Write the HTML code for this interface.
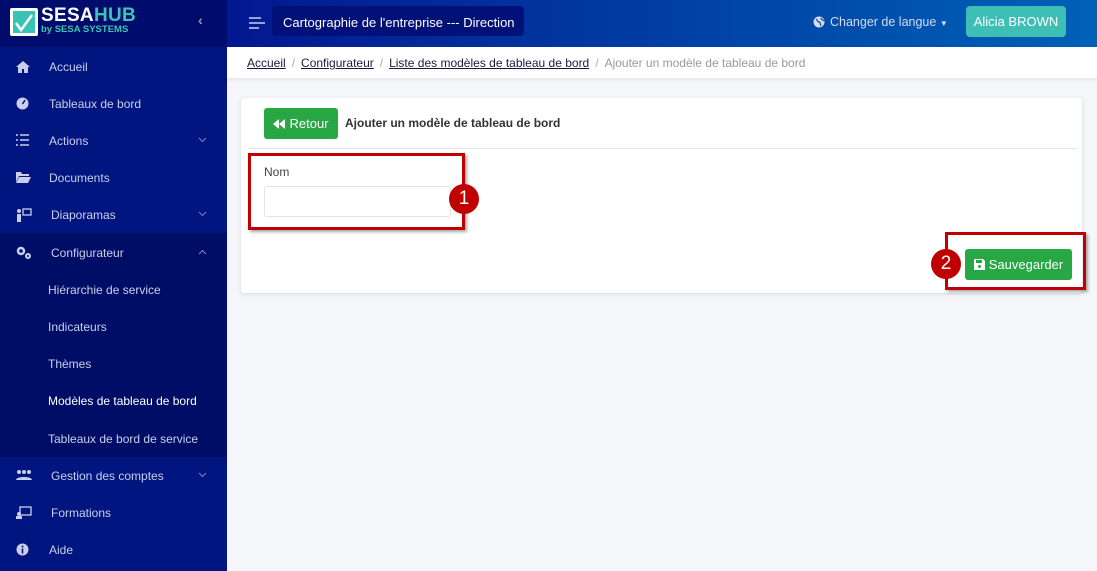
<!DOCTYPE html>
<html><head><meta charset="utf-8"><style>
*{box-sizing:border-box;margin:0;padding:0}
body{width:1097px;height:571px;overflow:hidden;font-family:"Liberation Sans",sans-serif;background:#f4f6f9;position:relative;font-size:13px}
.sb{position:absolute;left:0;top:0;width:227px;height:571px;background:#00157f}
.logo{height:47px;background:#000c6b;position:relative}
.mi{position:absolute;left:0;width:227px;height:37px;color:#c9cfea;font-size:12px;display:flex;align-items:center}
.mi svg{position:absolute;left:16px;top:12px}
.mi .t{position:absolute;left:49px}
.mi .ch{position:absolute;left:198px;top:15px}
.sub{position:absolute;left:0;top:233px;width:227px;height:224px;background:#000d66}
.hdr{position:absolute;left:227px;top:0;width:870px;height:47px;background:linear-gradient(90deg,#031790,#0046a8 60%,#0061b6)}
.bc{position:absolute;left:227px;top:47px;width:870px;height:31px;background:#fff;box-shadow:0 2px 3px rgba(0,0,0,.06);font-size:12px;color:#333;padding:9px 0 0 20px}
.bc a{color:#1a1a40;text-decoration:underline}
.bc .s{color:#aaa;margin:0 6px}
.card{position:absolute;left:241px;top:98px;width:841px;height:195px;background:#fff;border-radius:3px;box-shadow:0 1px 4px rgba(0,0,0,.12)}
.btn{position:absolute;background:#28a745;color:#fff;border-radius:3px;font-size:13px;display:flex;align-items:center;justify-content:center;gap:4px}
.red{position:absolute;border:3px solid #c00000;box-shadow:2px 2px 3px rgba(0,0,0,.35)}
.num{position:absolute;width:30px;height:30px;border-radius:50%;background:#c00000;color:#fff;font-size:19px;display:flex;align-items:center;justify-content:center}
</style></head><body>
<div class="sb">
 <div class="logo">
  <div style="position:absolute;left:10px;top:8px;width:28px;height:28px;background:#fff;border-radius:2px"><div style="position:absolute;left:3px;top:3px;width:22px;height:22px;background:#38c3b5"></div><svg style="position:absolute;left:3px;top:3px" width="22" height="22"><path d="M3 12 L8 19 L19 4" stroke="#fff" stroke-width="2.5" fill="none"/></svg></div>
  <div style="position:absolute;left:41px;top:5px;font-weight:bold;font-size:19px;color:#fff;letter-spacing:.3px">SESA<span style="color:#3ec3b4">HUB</span></div>
  <div style="position:absolute;left:41px;top:24px;font-weight:bold;font-size:9.5px;color:#3ec3b4">by SESA SYSTEMS</div>
  <div style="position:absolute;left:198px;top:12px;color:#99a;font-size:14px;font-weight:bold">‹</div>
 </div>
 <div class="sub"></div>
 <div class="mi" style="top:48px"><svg width="14" height="13"><path d="M7 1L0 7h2v6h4V9h2v4h4V7h2z" fill="#c9cfea"/></svg><span class="t">Accueil</span></div>
 <div class="mi" style="top:85px"><svg width="13" height="13"><circle cx="6.5" cy="6.5" r="6" fill="#c9cfea"/><path d="M6.5 7L9 3" stroke="#00157f" stroke-width="1.5"/></svg><span class="t">Tableaux de bord</span></div>
 <div class="mi" style="top:122px"><svg width="13" height="12"><path d="M0 1h2M4 1h9M0 6h2M4 6h9M0 11h2M4 11h9" stroke="#c9cfea" stroke-width="1.6"/></svg><span class="t">Actions</span><svg class="ch" style="left:198px" width="9" height="6"><path d="M1 1l3.5 3.5L8 1" stroke="#7a84c0" fill="none"/></svg></div>
 <div class="mi" style="top:159px"><svg width="15" height="12"><path d="M0 1h5l1 2h7v2H3L0 11z M3 6h12l-3 6H0z" fill="#c9cfea"/></svg><span class="t">Documents</span></div>
 <div class="mi" style="top:196px"><svg width="16" height="14"><circle cx="3" cy="3" r="2" fill="#c9cfea"/><rect x="1" y="6" width="4" height="8" fill="#c9cfea"/><rect x="7" y="1" width="8" height="6" fill="none" stroke="#c9cfea" stroke-width="1.3"/></svg><span class="t" style="left:51px">Diaporamas</span><svg class="ch" width="9" height="6"><path d="M1 1l3.5 3.5L8 1" stroke="#7a84c0" fill="none"/></svg></div>
 <div class="mi" style="top:234px"><svg width="16" height="13"><circle cx="5" cy="5" r="3" fill="none" stroke="#c9cfea" stroke-width="2.5"/><circle cx="12" cy="10" r="2" fill="none" stroke="#c9cfea" stroke-width="2"/></svg><span class="t" style="left:51px">Configurateur</span><svg class="ch" width="9" height="6"><path d="M1 5l3.5-3.5L8 5" stroke="#7a84c0" fill="none"/></svg></div>
 <div class="mi" style="top:271px"><span class="t" style="left:48px">Hiérarchie de service</span></div>
 <div class="mi" style="top:308px"><span class="t" style="left:48px">Indicateurs</span></div>
 <div class="mi" style="top:345px"><span class="t" style="left:48px">Thèmes</span></div>
 <div class="mi" style="top:382px;color:#fff"><span class="t" style="left:48px">Modèles de tableau de bord</span></div>
 <div class="mi" style="top:420px"><span class="t" style="left:48px">Tableaux de bord de service</span></div>
 <div class="mi" style="top:457px"><svg width="16" height="12"><circle cx="3" cy="3" r="2" fill="#c9cfea"/><circle cx="8" cy="3" r="2" fill="#c9cfea"/><circle cx="13" cy="3" r="2" fill="#c9cfea"/><path d="M0 11c0-4 16-4 16 0z" fill="#c9cfea"/></svg><span class="t" style="left:51px">Gestion des comptes</span><svg class="ch" width="9" height="6"><path d="M1 1l3.5 3.5L8 1" stroke="#7a84c0" fill="none"/></svg></div>
 <div class="mi" style="top:494px"><svg width="16" height="13"><rect x="4" y="1" width="11" height="8" fill="none" stroke="#c9cfea" stroke-width="1.3"/><circle cx="3" cy="8" r="2" fill="#c9cfea"/><rect x="0" y="10" width="6" height="3" fill="#c9cfea"/></svg><span class="t" style="left:51px">Formations</span></div>
 <div class="mi" style="top:531px"><svg width="13" height="13"><circle cx="6.5" cy="6.5" r="6" fill="#c9cfea"/><rect x="5.7" y="5.5" width="1.6" height="5" fill="#00157f"/><circle cx="6.5" cy="3.5" r="1" fill="#00157f"/></svg><span class="t">Aide</span></div>
</div>
<div class="hdr">
 <svg style="position:absolute;left:22px;top:17px" width="16" height="12"><path d="M0 1h12M0 6h16M0 11h10" stroke="#c8d0f0" stroke-width="1.6"/></svg>
 <div style="position:absolute;left:45px;top:6px;width:252px;height:30px;background:#011178;border-radius:4px;color:#fff;font-size:13px;padding:9px 0 0 11px">Cartographie de l'entreprise --- Direction</div>
 <svg style="position:absolute;left:586px;top:16px" width="12" height="12"><circle cx="6" cy="6" r="5.5" fill="#d5dcf0"/><path d="M3 3c2 1 1 3 3 3s1 3 2 4M8 2c0 2 2 2 3 3" stroke="#0a48a8" stroke-width="1.2" fill="none"/></svg>
 <div style="position:absolute;left:603px;top:15px;color:#d5dcf0;font-size:12.5px">Changer de langue <span style="font-size:8px">▼</span></div>
 <div style="position:absolute;left:739px;top:6px;width:100px;height:31px;background:#3dbfb5;border-radius:4px;color:#fff;font-size:13px;display:flex;align-items:center;justify-content:center">Alicia BROWN</div>
</div>
<div class="bc"><a>Accueil</a><span class="s">/</span><a>Configurateur</a><span class="s">/</span><a>Liste des modèles de tableau de bord</a><span class="s">/</span><span style="color:#999">Ajouter un modèle de tableau de bord</span></div>
<div class="card">
 <div class="btn" style="left:23px;top:10px;width:74px;height:31px"><svg width="12" height="10"><path d="M6 0L0 5l6 5zM12 0L6 5l6 5z" fill="#fff"/></svg>Retour</div>
 <div style="position:absolute;left:104px;top:18px;font-weight:bold;font-size:12px;color:#333">Ajouter un modèle de tableau de bord</div>
 <div style="position:absolute;left:7px;top:50px;width:837px;height:1px;background:#e5e5e5;width:829px"></div>
 <div style="position:absolute;left:23px;top:67px;font-size:12px;color:#444">Nom</div>
 <div style="position:absolute;left:23px;top:88px;width:187px;height:31px;border:1px solid #e3e3e3;border-radius:3px"></div>
 <div class="btn" style="left:724px;top:151px;width:107px;height:31px"><svg width="11" height="11"><path d="M0 0h9l2 2v9H0z" fill="#fff"/><rect x="2" y="1" width="6" height="3" fill="#28a745"/><circle cx="5.5" cy="7.5" r="1.5" fill="#28a745"/></svg>Sauvegarder</div>
</div>
<div class="red" style="left:248px;top:153px;width:217px;height:77px"></div>
<div class="num" style="left:449px;top:184px">1</div>
<div class="red" style="left:945px;top:232px;width:141px;height:58px"></div>
<div class="num" style="left:931px;top:249px">2</div>
</body></html>
